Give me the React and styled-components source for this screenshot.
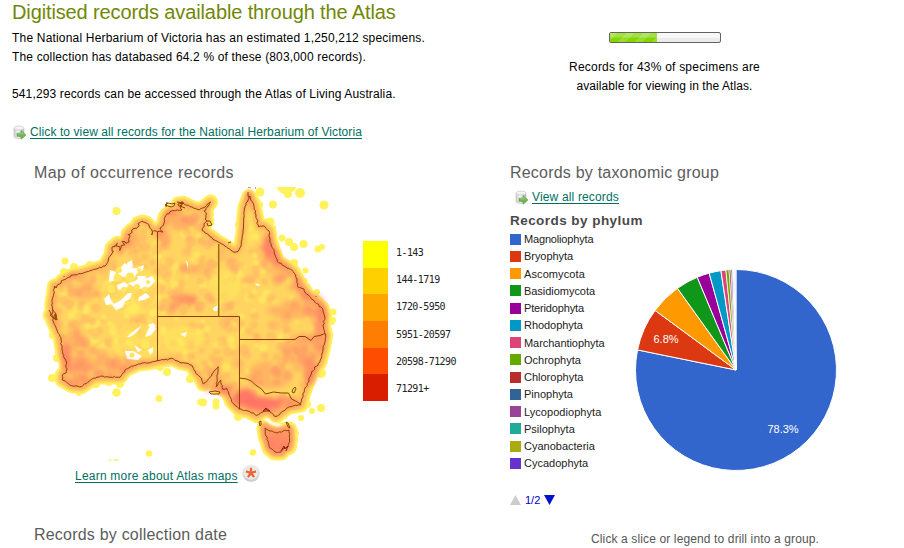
import React from 'react';
import styled, { createGlobalStyle } from 'styled-components';

const Global = createGlobalStyle`
  * { box-sizing: border-box; }
  body { margin: 0; background: #fff; color: #000; overflow: hidden;
    font-family: "Liberation Sans", Arial, sans-serif; font-size: 12px; }
  h1, h2, h3, p, ul { margin: 0; padding: 0; }
  svg { display: block; }
`;

const Page = styled.main`
  width: 904px;
  height: 548px;
  overflow: hidden;
  display: flex;
  flex-direction: column;
`;
const Header = styled.header`
  display: flex;
  height: 160px;
  padding-left: 12px;
`;
const Summary = styled.section`
  width: 497px;
`;
const Title = styled.h1`
  font-size: 20px;
  font-weight: 400;
  line-height: 24px;
  color: #718804;
  letter-spacing: -0.12px;
  margin-bottom: 5px;
`;
const Line = styled.p`
  height: 19px;
  line-height: 19px;
  white-space: nowrap;
  letter-spacing: ${(p) => p.$track || 0}px;
  margin-bottom: ${(p) => p.$gap || 0}px;
`;
const LinkRow = styled.div`
  display: flex;
  align-items: center;
  gap: 3px;
  height: 19px;
  padding-left: ${(p) => p.$indent || 0}px;
  margin-top: ${(p) => p.$top || 0}px;
`;
const Link = styled.a`
  color: #00705f;
  line-height: 19px;
  white-space: nowrap;
  text-decoration: underline;
  text-underline-offset: 2px;
  text-decoration-thickness: 1px;
  letter-spacing: ${(p) => p.$track || 0}px;
`;
const Availability = styled.aside`
  width: 311px;
  padding-top: 32px;
  display: flex;
  flex-direction: column;
  align-items: center;
`;
const Meter = styled.div`
  width: 112px;
  height: 11px;
  border: 1px solid #626262;
  border-radius: 2px;
  background: linear-gradient(#f7f7f7 0 50%, #ebebeb 50%);
  margin-bottom: 15px;
`;
const MeterFill = styled.div`
  width: 47px;
  height: 100%;
  background:
    repeating-linear-gradient(135deg, rgba(255,255,255,.16) 0 5px, transparent 5px 12px),
    linear-gradient(#a4e041 0 45%, #83d600 55%);
`;
const Body = styled.div`
  display: flex;
  padding-left: 34px;
`;
const MapColumn = styled.section`
  width: 476px;
`;
const ChartColumn = styled.section`
  width: 394px;
`;
const SectionTitle = styled.h2`
  font-size: 16px;
  font-weight: 400;
  line-height: 20px;
  height: 20px;
  color: #5c5c5c;
  white-space: nowrap;
  letter-spacing: ${(p) => p.$track}px;
  margin-top: ${(p) => p.$top || 0}px;
`;
const MapRow = styled.div`
  display: flex;
  height: 274px;
  margin-top: 4px;
`;
const ScaleBar = styled.div`
  display: flex;
  flex-direction: column;
  width: 25px;
  height: 160px;
  margin-top: 54px;
`;
const ScaleSwatch = styled.span`
  flex: 1;
  background: ${(p) => p.$color};
`;
const ScaleLabels = styled.ul`
  list-style: none;
  margin: 54px 0 0 8px;
`;
const ScaleLabel = styled.li`
  height: 27.2px;
  font: 10px/24px "DejaVu Sans Mono", monospace;
  color: #222;
  letter-spacing: -0.57px;
  white-space: nowrap;
`;
const MapHelp = styled.div`
  display: flex;
  align-items: flex-start;
  height: 24px;
  gap: 4px;
  padding: 3px 0 0 41px;
`;
const MapLinkLine = styled.span`
  display: flex;
  padding-top: 3px;
`;
const ChartTitle = styled.h3`
  font-size: 13.5px;
  line-height: 18px;
  color: #4a4a4a;
  letter-spacing: 0.45px;
  margin-top: 5px;
`;
const ChartRow = styled.div`
  display: flex;
  height: 278px;
`;
const Legend = styled.ul`
  list-style: none;
  width: 125px;
  padding-top: 0.4px;
`;
const LegendItem = styled.li`
  display: flex;
  align-items: center;
  gap: 3px;
  height: 17.25px;
  font-size: 11px;
  color: #222;
  letter-spacing: ${(p) => p.$track}px;
`;
const Swatch = styled.span`
  width: 11px;
  height: 11px;
  background: ${(p) => p.$color};
`;
const Pager = styled.div`
  display: flex;
  align-items: center;
  gap: 4px;
  height: 16px;
  margin-top: 20px;
  font-size: 11px;
  color: #0000cc;
`;
const PieBox = styled.div`
  padding-top: 39px;
`;
const PieText = styled.text`
  font: 11px "Liberation Sans", Arial, sans-serif;
  fill: #fff;
  text-anchor: middle;
`;
const Hint = styled.p`
  margin: 23px 0 0 81px;
  line-height: 16px;
  color: #555;
  letter-spacing: 0.128px;
`;

function RecordsIcon() {
  return (
    <svg width="14" height="15" viewBox="0 0 14 15">
      <defs>
        <linearGradient id="can" x1="0" x2="1">
          <stop offset="0" stopColor="#c9c9c9" />
          <stop offset=".4" stopColor="#f7f7f7" />
          <stop offset="1" stopColor="#b5b5b5" />
        </linearGradient>
      </defs>
      <path d="M1 3v8.5c0 1.2 2 2 5 2s5-.8 5-2V3z" fill="url(#can)" stroke="#c4c4c4" strokeWidth=".7" />
      <ellipse cx="6" cy="3" rx="5" ry="2" fill="#f4f4f4" stroke="#c9c9c9" strokeWidth=".7" />
      <path d="M4 8.2h4V5.6l5 4.3-5 4.3v-2.6H4z" fill="#6fb44f" stroke="#5fa04e" strokeWidth=".6" />
      <path d="M4.8 9h4V7.5l2.6 2.3" fill="none" stroke="#a5d98c" strokeWidth=".7" />
    </svg>
  );
}

function HelpIcon() {
  return (
    <svg width="18" height="18" viewBox="0 0 18 18">
      <defs>
        <linearGradient id="disc" x2="0" y2="1">
          <stop offset="0" stopColor="#f4f4f4" />
          <stop offset="1" stopColor="#c9c9c9" />
        </linearGradient>
      </defs>
      <circle cx="9" cy="9" r="8.8" fill="url(#disc)" />
      <circle cx="9" cy="8.5" r="7.2" fill="#eaeaea" />
      <path d="M9 9V3.8M9 9l5-1.6M9 9l3.1 4.2M9 9l-3.1 4.2M9 9L4 7.4" stroke="#ef6330" strokeWidth="2.2" />
    </svg>
  );
}

function makeRandom(seed) {
  let s = seed;
  return () => {
    s = (s * 16807) % 2147483647;
    return s / 2147483647;
  };
}

const COAST = [
  [157.7, 231.7], [154, 230.5], [151.7, 235], [152, 230], [146.7, 223.3], [143, 222], [138, 223.5], [136, 228], [131.7, 230],
  [128, 234], [129, 242], [125, 241.7], [120, 250], [117.3, 243.3], [112, 248], [111, 255], [105, 266],
  [98, 268.5], [90, 270.7], [82, 273.5], [73.3, 275], [63.3, 280], [56, 288], [54.5, 286], [53.5, 294],
  [51.7, 305], [53, 312], [50, 315], [56, 320], [55, 314], [52.5, 320], [57, 330], [60, 336.7], [62.7, 353.3], [66.7, 363.3],
  [66, 373], [62.3, 375], [62.3, 380], [71.7, 385.7], [81.7, 386.7], [91.7, 379.3], [97, 377], [106.7, 376.7],
  [120, 377.3], [125, 370], [138.3, 364], [148, 363], [157.7, 360.7], [173.3, 358.7], [180, 362.5], [191.7, 365],
  [195, 371], [200, 377], [203.3, 384], [206.7, 381.7], [212, 374], [218.3, 366.7], [217, 377], [216, 387],
  [220.7, 380], [222.7, 389.3], [226.7, 388.3], [229, 394], [231.7, 401.7], [239.3, 409.3], [248, 411],
  [256.7, 415.5], [263, 412], [266, 409], [270, 412], [276, 416.5], [282, 412], [288.3, 407.3], [300.7, 405],
  [303, 395], [307.3, 383.3], [311.7, 371.7], [320, 362], [323, 350], [325.7, 335], [323.3, 327],
  [324.5, 316], [322.3, 308.3], [314, 301], [306.7, 294], [304, 289], [298.3, 287.5], [297, 279], [293.3, 271.7],
  [286, 267], [277.3, 261.7], [275, 255], [270, 240], [269, 231], [264, 226], [258.3, 226.7], [256, 215],
  [253.3, 203.3], [249, 196.7], [245, 206.7], [243.8, 218], [243, 232], [241, 246], [238, 251.5], [234, 252.3],
  [225, 246], [218, 242], [211.7, 237.3], [202.3, 230.7], [204, 224], [207, 221], [205, 219], [206.5, 214], [204, 211], [210.7, 202],
  [205, 207], [199, 210], [190, 206.7], [183.3, 203.3], [178, 204], [181.7, 210], [170, 211.7], [165, 217], [163.3, 225], [160, 228], [163, 232],
];
const TASMANIA = [
  [265, 428], [270, 431], [277, 433], [283, 431], [289, 430], [289.5, 440], [288, 447], [284, 448], [281, 452],
  [275, 452], [270, 448], [268, 441], [266, 436],
];
const TINY_ISLANDS = [
  'M165 205l3-2 4 1 3-1-1 3-3 1-3-1zM167 202l-1 5M177 202l7 1-4 3 5 2M182 201l-1 6',
  'M209 392l6-1 5 1-1 2-8 0zM259 422l2-1 0 4-1 1zM286 422l2 1 2 5-2-1z',
  'M293 389l2-2 1 2-2 4-2-1zM248 187h3M255 188h1M248 192v4l3 1',
  'M206 221l4 0 2 4-4 1-1-3M228 243l3-1M49 310l4 7 4 3-1-6-4-5M64 276v1M316 296v1',
];
const toPath = (pts) => 'M' + pts.map((p) => p.join(' ')).join('L') + 'Z';

function roughen(points, seed, amount) {
  const rnd = makeRandom(seed);
  const out = [];
  points.forEach((a, i) => {
    const b = points[(i + 1) % points.length];
    const n = Math.max(1, Math.round(Math.hypot(b[0] - a[0], b[1] - a[1]) / 1.9));
    const gulf = a[0] > 218 && a[0] < 245 && a[1] > 205 && a[1] < 255;
    const kimberley = a[0] > 108 && a[0] < 150 && a[1] < 252;
    for (let k = 0; k < n; k++) {
      const j = k ? (gulf ? 0.5 : kimberley ? amount * 3 : amount) : 0;
      out.push([
        +(a[0] + ((b[0] - a[0]) * k) / n + (rnd() - 0.5) * j).toFixed(1),
        +(a[1] + ((b[1] - a[1]) * k) / n + (rnd() - 0.5) * j).toFixed(1),
      ]);
    }
  });
  return out;
}
const LAND = toPath(COAST);
const LAND_LINE = toPath(roughen(COAST, 71, 1.5));
const TAS = toPath(TASMANIA);
const TAS_LINE = toPath(roughen(TASMANIA, 13, 1.4));

function scatter(seed, count, min, max) {
  const rnd = makeRandom(seed);
  return Array.from({ length: count }, () => [48 + rnd() * 280, 195 + rnd() * 222, min + rnd() * (max - min)]);
}
const WARM = scatter(401, 560, 3, 5.5);
const PALE = scatter(977, 360, 2, 4.5);

const GAPS = [
  'M109 280l8-3 3-9 5-5 6 5 6 0 7-3-1 5-6 3-4 8-8-4-6-1-5 4-5 2z',
  'M127 263l5-3 1 7-4 3zM110 270l6 2-2 9-5-1zM117 285l7-3 5 3-4 4-7 1z',
  'M128 283l7-2 6-5 4 3 7-3 3 5-5 6-11 2-5-2zM137 276l8 0 4 5-8 3z',
  'M104 299l5-5 2 6 3 4-8 1zM112 305l9-5 7-7 4 0-2 6-5 3-2 5-7 3z',
  'M139 297l7-4 4 4-6 3-6 1zM148 325l5-2 3 3-5 3zM127 337l8-7 6-4-4 6-7 5z',
  'M149 328l5-4 2 5-5 6-6 2zM134 345l8 5-4 2zM125 351l8 0 9 5-4 4-11-1z',
  'M148 350l5-3 0 5-3 3zM186 260l2 3 0 7-1-5zM213 308l5-3-1 6-3 0zM255 283l6 2-4 1z',
  'M180 334l7-2-2 5zM210 324l4 0z',
];
const GAP_DOTS = [
  [119, 270, 3], [117.5, 278, 4], [130, 277, 4.5], [111, 289, 4], [124, 290, 3], [137, 287, 3], [127, 303, 2.5],
  [145, 289, 2.5], [145, 344, 4.5], [132, 355, 2.5], [148, 282, 2], [139, 270, 2],
];
const SEA_SPOTS = [
  [116.5, 211, 4], [65, 261, 3.5], [74, 267, 4], [64, 272, 4], [273, 204.5, 4], [324, 205, 4.5], [260, 192, 4.5],
  [284, 190, 4], [288, 194, 4], [300, 193, 5], [282, 187, 5], [291, 187, 5], [303.5, 244, 4], [294, 247, 4],
  [289, 242, 4], [282, 238, 3.5], [318, 249, 3.5], [322, 247, 3], [305.5, 270.5, 3], [294, 263, 4], [270, 222, 4.5],
  [273, 228, 3], [259, 205, 4], [239, 224.5, 4], [304, 281, 3.5], [317, 292, 3], [333, 312, 3.5], [332, 322, 3],
  [52, 378, 4], [116.5, 392.5, 4.3], [79, 393, 3], [159, 398.5, 3.5], [167, 372, 4], [149, 453.5, 3.3],
  [203, 402.5, 4], [216, 402, 3.5], [216, 406, 3.5], [321, 408, 4], [312, 411, 3], [307, 404, 4], [301, 418, 3],
  [253, 452.5, 3.3], [294, 447, 3], [296, 433, 3], [321, 373, 5], [333, 320, 3], [238, 417, 4], [212, 202, 3],
  [96, 384, 4], [109, 382, 4], [120, 384, 4], [160, 367, 4], [190, 379, 4], [258, 419, 4], [110, 247, 4], [90, 265, 4],
  [53, 335, 4], [57, 358, 4], [200, 402, 3], [110, 460.8, 1.2], [116, 461.5, 2.5],
];
const HOT = [
  [268, 247, 5, 13, 0.8], [275, 257, 5, 8, 0.6], [184, 299, 14, 5, 0.6], [175, 307, 8, 5, 0.4], [66, 358, 5, 15, 0.5],
  [78, 380, 12, 6, 0.5], [245, 398, 12, 9, 0.9], [263, 404, 18, 7, 0.9], [286, 402, 12, 6, 0.6],
  [310, 371, 7, 14, 0.6], [320, 335, 6, 20, 0.5], [297, 285, 8, 8, 0.4], [305, 296, 5, 5, 0.7], [322, 314, 5, 9, 0.55],
  [249, 197, 3, 6, 0.8], [170, 213, 5, 4, 0.6], [163, 237, 6, 9, 0.35], [225, 390, 8, 6, 0.6], [210, 388, 6, 5, 0.4],
  [278, 443, 10, 8, 0.5], [73, 276, 5, 3, 0.6], [300, 350, 18, 16, 0.35], [180, 222, 16, 8, 0.35],
  [84, 292, 14, 7, 0.3], [105, 365, 30, 10, 0.35], [75, 350, 12, 22, 0.3], [290, 310, 22, 9, 0.3], [195, 270, 16, 5, 0.2],
  [280, 270, 11, 11, 0.35], [270, 375, 22, 14, 0.3], [315, 305, 10, 12, 0.35], [131, 240, 10, 8, 0.3],
];

function OccurrenceMap() {
  return (
    <svg width="329" height="274" viewBox="34 187 329 274">
      <defs>
        <clipPath id="land"><path d={LAND} /></clipPath>
        <filter id="soft" x="-10%" y="-10%" width="120%" height="120%" colorInterpolationFilters="sRGB"><feGaussianBlur stdDeviation="0.7" /></filter>
        <filter id="blend" x="-10%" y="-10%" width="120%" height="120%" colorInterpolationFilters="sRGB"><feGaussianBlur stdDeviation="1.1" /></filter>
        <filter id="glow" x="-30%" y="-30%" width="160%" height="160%" colorInterpolationFilters="sRGB"><feGaussianBlur stdDeviation="2.4" /></filter>
      </defs>
      <g fill="#fff25a" filter="url(#soft)">
        {SEA_SPOTS.map(([x, y, r], i) => <circle key={i} cx={x} cy={y} r={r} />)}
      </g>
      <g filter="url(#soft)" strokeLinejoin="round">
        <path d={LAND} fill="#ffd85c" stroke="#fff25e" strokeWidth="15" />
        <path d={TAS} fill="#ffb060" stroke="#fff25e" strokeWidth="17" />
      </g>
      <path d="M263 419l8 6 10 3 2-3-10-3-4-4z" fill="#fff" opacity=".8" />
      <g filter="url(#blend)" fill="none" strokeLinejoin="round">
        <path d={LAND} stroke="#ffca62" strokeWidth="9" />
        <path d={TAS} stroke="#ffb868" strokeWidth="10" />
      </g>
      <g clipPath="url(#land)">
        <g filter="url(#blend)">
          <path d={LAND} fill="#ffd460" />
          {PALE.map(([x, y, r], i) => <circle key={i} cx={x} cy={y} r={r} fill="#ffec5f" opacity=".7" />)}
          {WARM.map(([x, y, r], i) => <circle key={i} cx={x} cy={y} r={r} fill="#ffab66" opacity=".42" />)}
          <g fill="#ffee5c" opacity=".45">
            <ellipse cx="131" cy="290" rx="29" ry="25" />
            <ellipse cx="136" cy="342" rx="25" ry="19" />
            <ellipse cx="225" cy="286" rx="16" ry="16" />
            <ellipse cx="185" cy="340" rx="22" ry="14" />
            <ellipse cx="249" cy="231" rx="9" ry="20" />
          </g>
        </g>
        <g filter="url(#soft)">
          {GAPS.map((d) => <path key={d} d={d} fill="#fff" />)}
          {GAP_DOTS.map(([x, y, r], i) => <circle key={i} cx={x} cy={y} r={r} fill="#ffe65e" />)}
        </g>
      </g>
      <g filter="url(#glow)">
        <path d={LAND} fill="none" stroke="#ff8a62" strokeWidth="4" opacity=".6" />
        <path d={TAS} fill="#ff9464" stroke="#ff8a64" strokeWidth="6" opacity=".8" />
        {HOT.map(([x, y, rx, ry, o], i) => <ellipse key={i} cx={x} cy={y} rx={rx} ry={ry} fill="#ff6e66" opacity={o} />)}
      </g>
      <g fill="none" stroke="#8a4400" strokeWidth="1" strokeLinejoin="round">
        <path d={LAND_LINE} />
        <path d={TAS_LINE} />
        {TINY_ISLANDS.map((d) => <path key={d} d={d} />)}
        <path d="M157.5 232V361M157.5 316.5H239.5V409M239.5 339.5H295l4-3 6 0 6 4 3-4 6-1 5-2" />
        <path d="M218.7 244V316.5" stroke="#8f6a16" strokeWidth="1.4" />
        <path d="M239.5 378l7 1 5 2 4 4 6 4 4 5 8-2 8 1 7 0 3 6 4 2 5 3" />
        <path d="M263 411l3-3 4 3-4 0zM281 451l3-5 1 3 3-3-2 5" stroke="#8b1d12" />
      </g>
    </svg>
  );
}

const SLICES = [
  [0, 78.2, '#3366cc'], [78.2, 85.1, '#dc3912'], [85.1, 90.1, '#ff9900'], [90.1, 93.7, '#109618'],
  [93.7, 95.7, '#990099'], [95.7, 97.6, '#0099c6'], [97.6, 98.4, '#dd4477'], [98.4, 98.9, '#66aa00'],
  [98.9, 99.2, '#b82e2e'], [99.2, 99.45, '#316395'], [99.45, 99.65, '#e6dcea'], [99.65, 99.82, '#d6e6e8'], [99.82, 100, '#e4e0ee'],
];
function slicePath(from, to) {
  const at = (v) => {
    const a = (v / 100) * Math.PI * 2;
    return `${(101 + 100.5 * Math.sin(a)).toFixed(2)} ${(101 - 100.5 * Math.cos(a)).toFixed(2)}`;
  };
  return `M101 101L${at(from)}A100.5 100.5 0 ${to - from > 50 ? 1 : 0} 1 ${at(to)}Z`;
}
function PhylumPie() {
  return (
    <svg width="203" height="203" viewBox="0 0 203 203">
      {SLICES.map(([a, b, c]) => (
        <path key={a} d={slicePath(a, b)} fill={c} stroke="#fff" strokeWidth={a > 98 ? 0.7 : 1} />
      ))}
      <PieText x="31" y="74">6.8%</PieText>
      <PieText x="148" y="164">78.3%</PieText>
    </svg>
  );
}

const SCALE = [
  ['1-143', '#ffff00'], ['144-1719', '#ffd000'], ['1720-5950', '#ffa500'],
  ['5951-20597', '#ff7d00'], ['20598-71290', '#ff4d00'], ['71291+', '#d91e00'],
];
const PHYLA = [
  ['Magnoliophyta', '#3366cc', -0.17], ['Bryophyta', '#dc3912', -0.05], ['Ascomycota', '#ff9900', 0.1],
  ['Basidiomycota', '#109618', -0.04], ['Pteridophyta', '#990099', -0.15], ['Rhodophyta', '#0099c6', -0.05],
  ['Marchantiophyta', '#dd4477', -0.05], ['Ochrophyta', '#66aa00', 0], ['Chlorophyta', '#b82e2e', 0],
  ['Pinophyta', '#316395', 0], ['Lycopodiophyta', '#994499', 0.05], ['Psilophyta', '#22aa99', 0],
  ['Cyanobacteria', '#aaaa11', 0], ['Cycadophyta', '#6633cc', 0],
];

export default function App() {
  return (
    <Page>
      <Global />
      <Header>
        <Summary>
          <Title>Digitised records available through the Atlas</Title>
          <Line $track={0.19}>The National Herbarium of Victoria has an estimated 1,250,212 specimens.</Line>
          <Line $track={0.155} $gap={18}>The collection has databased 64.2 % of these (803,000 records).</Line>
          <Line $track={0.135} $gap={19}>541,293 records can be accessed through the Atlas of Living Australia.</Line>
          <LinkRow $indent={1}>
            <RecordsIcon />
            <Link $track={0.095}>Click to view all records for the National Herbarium of Victoria</Link>
          </LinkRow>
        </Summary>
        <Availability>
          <Meter><MeterFill /></Meter>
          <Line $track={0.216}>Records for 43% of specimens are</Line>
          <Line $track={0.07}>available for viewing in the Atlas.</Line>
        </Availability>
      </Header>
      <Body>
        <MapColumn>
          <SectionTitle $top={3} $track={0.388}>Map of occurrence records</SectionTitle>
          <MapRow>
            <OccurrenceMap />
            <ScaleBar>
              {SCALE.map(([label, color]) => <ScaleSwatch key={label} $color={color} />)}
            </ScaleBar>
            <ScaleLabels>
              {SCALE.map(([label]) => <ScaleLabel key={label}>{label}</ScaleLabel>)}
            </ScaleLabels>
          </MapRow>
          <MapHelp>
            <MapLinkLine><Link $track={0.22}>Learn more about Atlas maps</Link></MapLinkLine>
            <HelpIcon />
          </MapHelp>
          <SectionTitle $top={40} $track={0.206}>Records by collection date</SectionTitle>
        </MapColumn>
        <ChartColumn>
          <SectionTitle $top={3} $track={0.206}>Records by taxonomic group</SectionTitle>
          <LinkRow $indent={5} $top={5}>
            <RecordsIcon />
            <Link $track={0.157}>View all records</Link>
          </LinkRow>
          <ChartTitle>Records by phylum</ChartTitle>
          <ChartRow>
            <Legend>
              {PHYLA.map(([name, color, track]) => (
                <LegendItem key={name} $track={track}><Swatch $color={color} />{name}</LegendItem>
              ))}
              <Pager>
                <svg width="11" height="10" viewBox="0 0 11 10"><path d="M0 10L5.5 0 11 10z" fill="#ccc" /></svg>
                <span>1/2</span>
                <svg width="11" height="10" viewBox="0 0 11 10"><path d="M0 0h11L5.5 10z" fill="#0011cc" /></svg>
              </Pager>
            </Legend>
            <PieBox><PhylumPie /></PieBox>
          </ChartRow>
          <Hint>Click a slice or legend to drill into a group.</Hint>
        </ChartColumn>
      </Body>
    </Page>
  );
}
